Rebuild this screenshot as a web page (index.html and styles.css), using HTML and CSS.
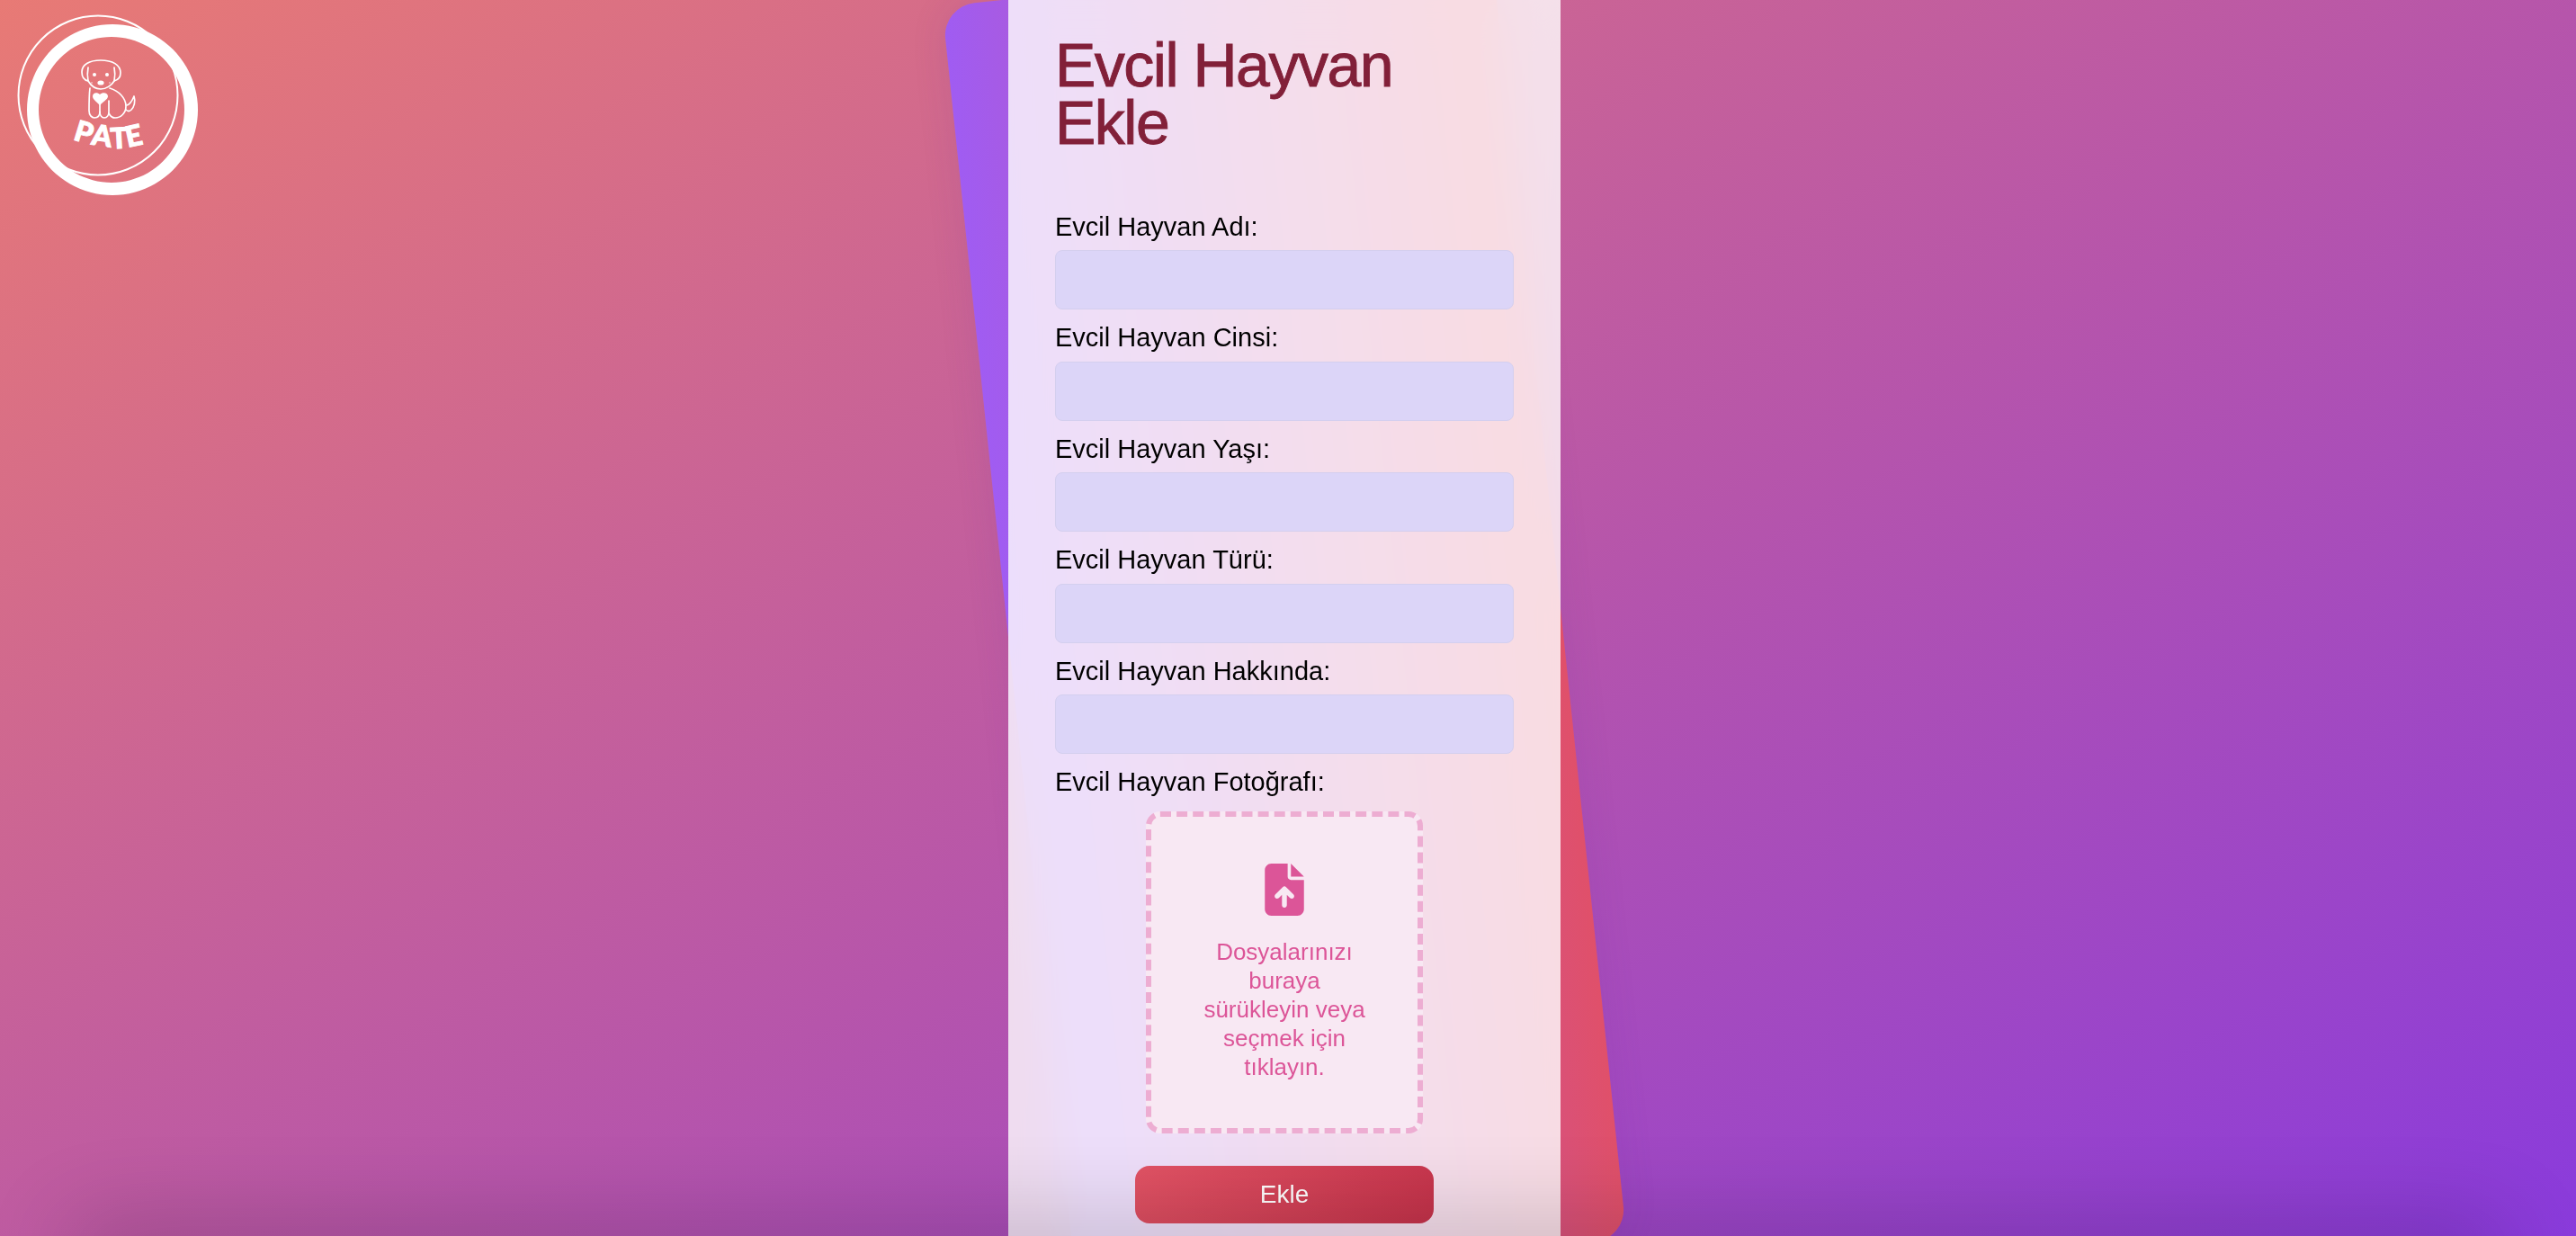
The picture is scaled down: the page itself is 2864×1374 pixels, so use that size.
FILE: index.html
```html
<!DOCTYPE html>
<html lang="tr">
<head>
<meta charset="utf-8">
<title>Evcil Hayvan Ekle</title>
<link rel="stylesheet" href="styles.css">
</head>
<body>
<a class="logo" href="#" aria-label="PATE">
<svg viewBox="0 0 260 240" width="260" height="240" class="logo-svg">
<circle cx="109" cy="106" r="88.5" fill="none" stroke="#fff" stroke-width="2"/>
<path fill="#fff" fill-rule="evenodd" d="M125 27a95 95 0 1 0 .01 0ZM124 41a81 81 0 1 1-.01 0Z"/>
<g fill="none" stroke="#fff" stroke-width="1.7" stroke-linecap="round" stroke-linejoin="round">
<path d="M98 90C93 89 91 85 91 80C91 72 99 67 112 67C125 67 134 72 134 81C134 86 131 89 127 90"/>
<path d="M98 75C97 80 97 85 98 90C101 95 106 99 112 99C118 99 124 95 127 90C128 85 128 80 127 75"/>
<path d="M100 98C99 106 99 116 99 123C99 128 102 131 105 131C109 131 111 128 111 124V112"/>
<path d="M111 124C111 128 113 131 116 131C119 131 121 128 121 124V112"/>
<path d="M121 126C123 130 125 131 128 131C134 131 140 126 140 118C140 109 132 101 122 98"/>
<path d="M141 117C145 116 147 112 149 107C151 113 149 119 146 122C144 124 142 124 140 122"/>
</g>
<circle cx="105" cy="83" r="2" fill="#fff"/>
<circle cx="119" cy="83" r="2" fill="#fff"/>
<circle cx="102" cy="92" r=".7" fill="#fff"/>
<circle cx="122" cy="92" r=".7" fill="#fff"/>
<ellipse cx="112" cy="92" rx="3.6" ry="2.6" fill="#fff"/>
<path d="M111 117C106 112 103 110 103 107C103 103 108 102 111 105C114 102 120 103 120 107C120 110 116 112 111 117Z" fill="#fff"/>
<g class="logo-text" fill="#fff" stroke="#fff" stroke-width="1" text-anchor="middle">
<text transform="translate(90 158) rotate(17)">P</text>
<text transform="translate(112 162) rotate(8)">A</text>
<text transform="translate(133 165) rotate(-3)">T</text>
<text transform="translate(151 162) rotate(-12)">E</text>
</g>
</svg>
</a>
<div class="stage">
<main class="panel">
<h1 class="title">Evcil Hayvan Ekle</h1>
<form class="form">
<label class="field"><span class="field-label">Evcil Hayvan Adı:</span><input class="input" type="text"></label>
<label class="field"><span class="field-label">Evcil Hayvan Cinsi:</span><input class="input" type="text"></label>
<label class="field"><span class="field-label">Evcil Hayvan Yaşı:</span><input class="input" type="text"></label>
<label class="field"><span class="field-label">Evcil Hayvan Türü:</span><input class="input" type="text"></label>
<label class="field"><span class="field-label">Evcil Hayvan Hakkında:</span><input class="input" type="text"></label>
<div class="field"><span class="field-label">Evcil Hayvan Fotoğrafı:</span>
<div class="drop">
<svg class="drop-icon" viewBox="0 0 384 512" width="44" height="58"><path fill="#dc5598" d="M64 0C28.7 0 0 28.7 0 64V448c0 35.3 28.7 64 64 64H320c35.3 0 64-28.7 64-64V160H256c-17.7 0-32-14.3-32-32V0H64zM384 128L256 0V128H384zM216 408c0 13.3-10.7 24-24 24s-24-10.7-24-24V305.9l-31 31c-9.4 9.4-24.6 9.4-33.9 0s-9.4-24.6 0-33.9l72-72c9.4-9.4 24.6-9.4 33.9 0l72 72c9.4 9.4 9.4 24.6 0 33.9s-24.6 9.4-33.9 0l-31-31V408z"/></svg>
<p class="drop-text">Dosyalarınızı buraya sürükleyin veya seçmek için tıklayın.</p>
</div>
</div>
<button class="submit" type="button">Ekle</button>
</form>
</main>
</div>
<div class="bottom-shade"></div>
</body>
</html>
```
FILE: styles.css
```css
* { box-sizing: border-box; }
html, body { margin: 0; height: 100%; overflow: hidden; }
body {
  position: relative;
  height: 1374px;
  padding-right: 8px;
  background: linear-gradient(150deg, #e87a75 0%, #b655ab 55%, #8a3bdc 100%);
  font-family: "Liberation Sans", Arial, sans-serif;
  display: flex;
  justify-content: center;
  align-items: flex-start;
}
.logo { position: absolute; left: 0; top: 0; z-index: 3; }
.logo-svg { display: block; }
.logo-text text { font-family: "Lato", sans-serif; font-weight: 900; font-size: 32px; }
.stage {
  position: relative;
  flex: none;
  width: 614px;
  height: 1442px;
  margin-top: -29px;
}
.stage::before {
  content: "";
  position: absolute;
  inset: 0;
  border-radius: 36px;
  transform: rotate(-6deg);
  background: linear-gradient(90deg, #a05cf2 0%, #e0506a 100%);
  box-shadow: 0 0 40px rgba(100,40,160,.12);
}
.panel {
  position: relative;
  height: 100%;
  padding: 69px 52px 0;
  background: rgba(255,255,255,.8);
  backdrop-filter: blur(24px);
}
.title {
  margin: 0 0 64px;
  max-width: 420px;
  font-size: 68px;
  line-height: 64px;
  font-weight: 400;
  letter-spacing: -1.5px;
  color: #822039;
  -webkit-text-stroke: .9px #822039;
}
.form { display: flex; flex-direction: column; }
.field { display: block; }
.field-label { display: block; font-size: 29px; line-height: 41.4px; color: #000; }
.input {
  display: block;
  width: 100%;
  height: 66px;
  margin: 5px 0 11px;
  border: 1px solid #d4cfee;
  border-radius: 8px;
  background: #dcd5f8;
}
.drop {
  width: 308px;
  height: 358px;
  margin: 12px auto 0;
  padding-top: 52px;
  border: 6px dashed #edadd2;
  border-radius: 16px;
  background: #f8e8f3;
  display: flex;
  flex-direction: column;
  align-items: center;
}
.drop-icon { display: block; flex: none; }
.drop-text {
  margin: 24px 0 0;
  width: 190px;
  font-size: 26px;
  line-height: 32px;
  text-align: center;
  color: #dc5598;
}
.submit {
  align-self: center;
  width: 332px;
  height: 64px;
  margin-top: 36px;
  border: 0;
  border-radius: 16px;
  background: linear-gradient(135deg, #e25365, #c4324a);
  color: #fff;
  font: 28px "Liberation Sans", Arial, sans-serif;
}
.bottom-shade {
  position: absolute;
  left: 90px;
  right: 90px;
  top: 1374px;
  height: 40px;
  z-index: 2;
  box-shadow: 0 0 100px 10px rgba(0,0,0,.24);
}
```
